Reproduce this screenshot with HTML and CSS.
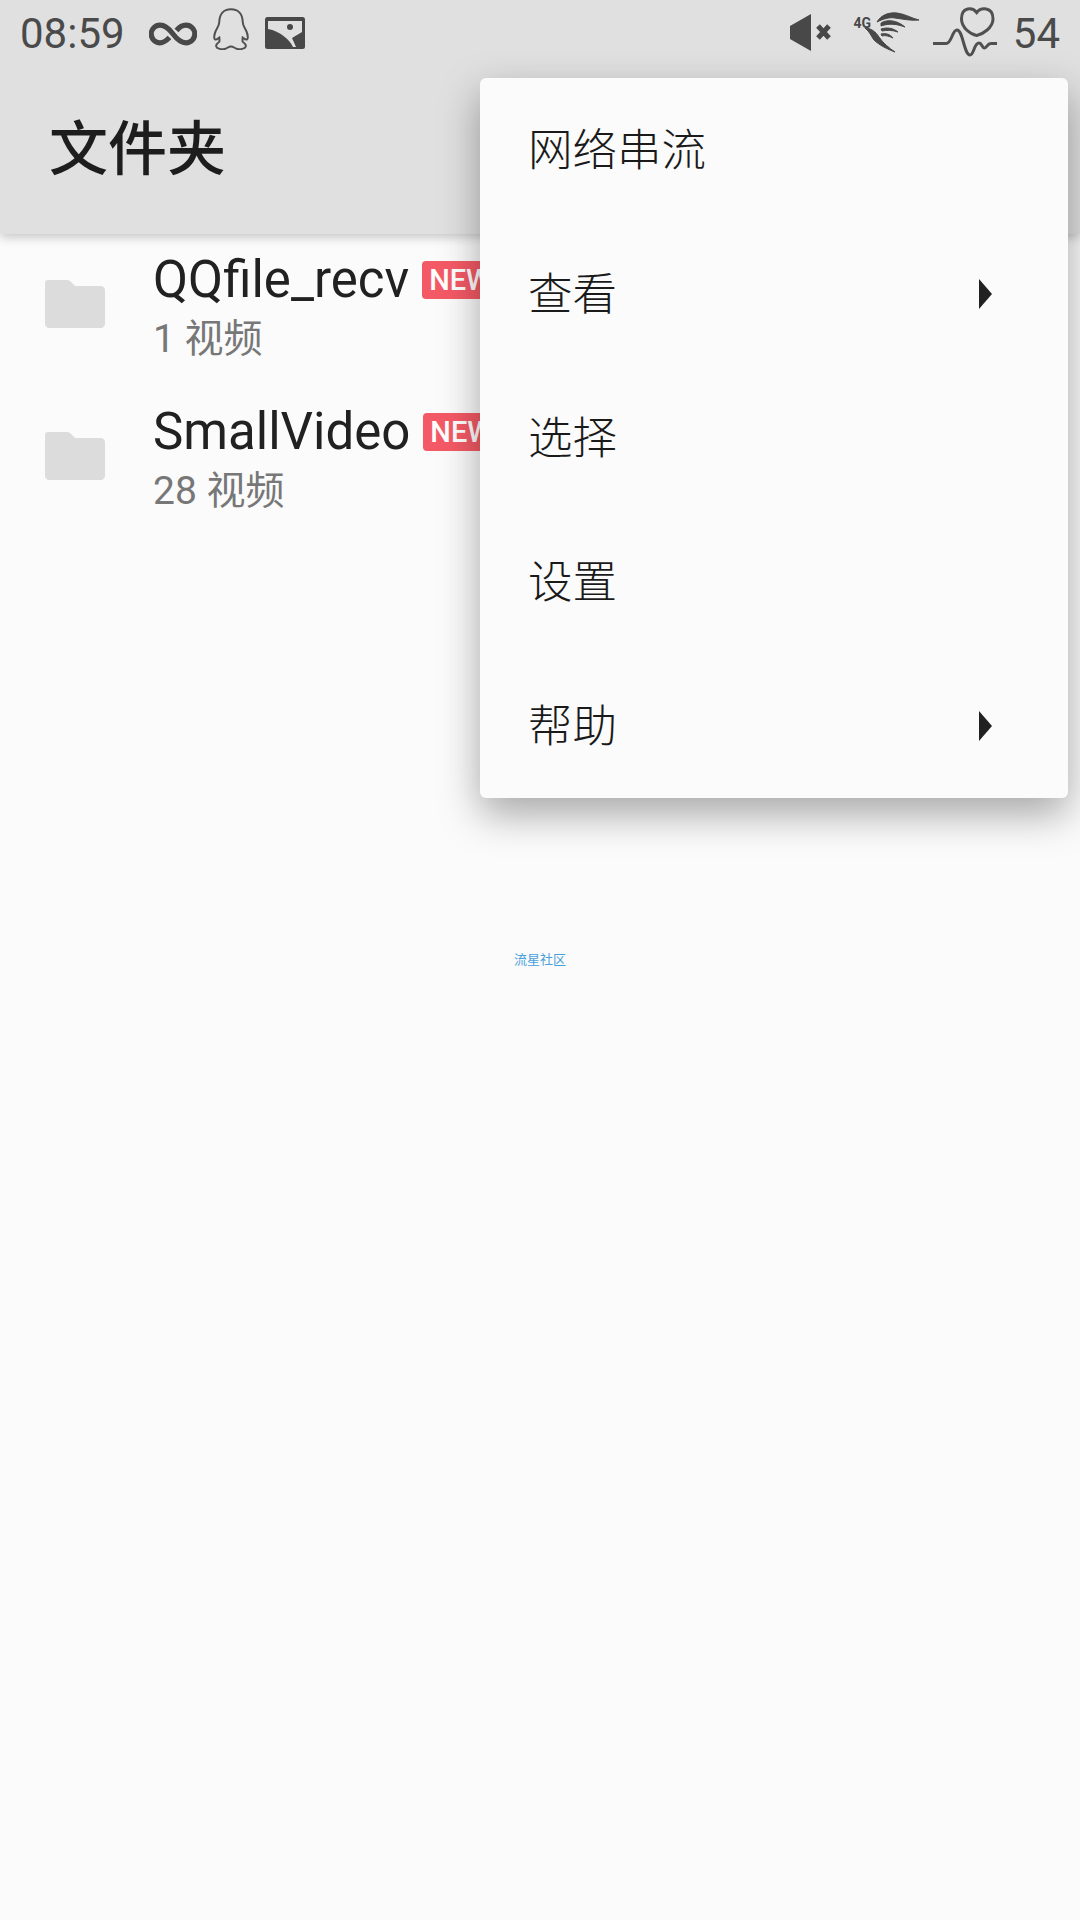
FILE: index.html
```html
<!DOCTYPE html>
<html lang="zh-CN">
<head>
    <meta charset="UTF-8">
    <meta name="viewport" content="width=device-width, initial-scale=1.0">
    <title>文件夹</title>
    <link rel="stylesheet" href="styles.css">
</head>
<body>
    <header class="app-header">
        <div class="status-bar">
            <div class="status-left">
                <span class="clock">08:59</span>
                <svg class="icon-infinity" viewBox="0 0 48 24"><path d="M20.500 15.500C18 18 15 20.800 11 20.800A8.800 8.800 0 0 1 11 3.200C17 3.200 21 8 24 12C27 16 31 20.800 37 20.800A8.800 8.800 0 0 0 37 3.200C33 3.200 30 5.500 27.500 8.500" fill="none" stroke="#484848" stroke-width="5.200"/></svg>
                <svg class="icon-qq" viewBox="0 0 36 42"><path d="M18 1.200C10 1.200 6.500 7 6.300 13.700C6.200 18 4 20 2.500 23.500C1 27 0.800 31 2 31.500C3.500 32 5 30.500 6.300 29.500C6.500 31 6.500 33 6.300 33.700C4.500 35 2.800 36.500 3.200 38.500C4 41 9 41.500 11.500 41C14 40.500 15.500 38.500 18 38.500C20.500 38.500 22 40.500 24.500 41C27 41.500 32 41 32.800 38.500C33.200 36.500 31.500 35 29.700 33.700C29.500 33 29.500 31 29.700 29.500C31 30.500 32.500 32 34 31.500C35.200 31 35 27 33.500 23.500C32 20 29.800 18 29.700 13.700C29.500 7 26 1.200 18 1.200Z" fill="none" stroke="#505050" stroke-width="2"/></svg>
                <svg class="icon-picture" viewBox="0 0 40 32"><rect width="40" height="32" rx="2.500" fill="#484848"/><path d="M3 4H37V15L27 21L31 30H28C25 23 15 14 3 12Z" fill="#e0e0e0"/><circle cx="25" cy="10" r="3" fill="#484848"/></svg>
            </div>
            <div class="status-right">
                <svg class="icon-mute" viewBox="0 0 42 38"><path d="M0 12L21 0V37L0 25Z" fill="#484848"/><path d="M28 12L39 24M39 12L28 24" stroke="#484848" stroke-width="5"/></svg>
                <svg class="icon-signal" viewBox="0 3 80 60">
                    <text class="signal-label" x="8.500" y="27.500">4G</text>
                    <g class="wing">
                        <path d="M32 22C36 15 44 12 52 13C60 14 66 18 74 20C66 21 58 19 50 18C44 17 38 19 32 22Z"/>
                        <path d="M36 23C42 19 52 20 60 27C52 24 44 23 36 26Z"/>
                        <path d="M36 29C42 27 48 28 53 32C47 30 42 30 37 31Z"/>
                        <path d="M36 34C41 33 45 34 48 38C44 36 40 35 37 36Z"/>
                        <path d="M20 28C26 28 31 32 34 37C38 43 44 48 50 52C42 49 34 45 29 40C26 36 25 32 20 28Z"/>
                    </g>
                </svg>
                <svg class="icon-health" viewBox="0 3 80 60"><path d="M51.700 12.500C48 7.500 36.500 6 36.500 19C36.500 28 46 34.500 51.700 35.500C57 34.500 68 28 68 19C68 6 55.500 7.500 51.700 12.500Z" fill="none" stroke="#505050" stroke-width="3"/><path d="M8 43.500H21C27 43.500 27 30 32 30C38 30 39 55 45 55C49 55 49 43 54 43C57 43 57 48 59.500 48C62 48 62 43.500 66 43.500H72" fill="none" stroke="#505050" stroke-width="3"/></svg>
                <span class="battery">54</span>
            </div>
        </div>
        <h1 class="app-title">文件夹</h1>
    </header>

    <main class="folder-list">
        <div class="folder-row">
            <svg class="folder-icon" viewBox="0 0 60 48"><path d="M3 0H22C24 0 25 1 26 2L30 6H56C58 6 60 8 60 10V44C60 46 58 48 56 48H4C2 48 0 46 0 44V3C0 1 1 0 3 0Z"/></svg>
            <div class="folder-text">
                <div class="folder-name">QQfile_recv<span class="new-badge">NEW</span></div>
                <div class="folder-count">1 视频</div>
            </div>
        </div>
        <div class="folder-row">
            <svg class="folder-icon" viewBox="0 0 60 48"><path d="M3 0H22C24 0 25 1 26 2L30 6H56C58 6 60 8 60 10V44C60 46 58 48 56 48H4C2 48 0 46 0 44V3C0 1 1 0 3 0Z"/></svg>
            <div class="folder-text">
                <div class="folder-name">SmallVideo<span class="new-badge">NEW</span></div>
                <div class="folder-count">28 视频</div>
            </div>
        </div>
    </main>

    <p class="watermark">流星社区</p>

    <ul class="popup-menu">
        <li class="menu-item">网络串流</li>
        <li class="menu-item">查看<span class="menu-arrow"></span></li>
        <li class="menu-item">选择</li>
        <li class="menu-item">设置</li>
        <li class="menu-item">帮助<span class="menu-arrow"></span></li>
    </ul>
</body>
</html>
```

FILE: styles.css
```css
* {
    box-sizing: border-box;
}

html, body {
    margin: 0;
    padding: 0;
}

body {
    position: relative;
    width: 1080px;
    height: 1920px;
    overflow: hidden;
    background: #fbfbfb;
    font-family: Roboto, "Noto Sans CJK SC", sans-serif;
    color: #212121;
}

.app-header {
    height: 234px;
    background: #e0e0e0;
    box-shadow: 0 3px 10px rgba(0, 0, 0, 0.22);
    position: relative;
}

.status-bar {
    height: 66px;
    display: flex;
    justify-content: space-between;
    align-items: center;
    padding: 0 20px;
    color: #4a4a4a;
}

.status-left,
.status-right {
    display: flex;
    align-items: center;
}

.clock {
    font-size: 42px;
    margin-right: 24px;
}

.icon-infinity {
    width: 48px;
    height: 24px;
    margin: 2px 16px 0 0;
}

.icon-qq {
    width: 36px;
    height: 42px;
    margin: -8px 16px 0 0;
}

.icon-picture {
    width: 40px;
    height: 32px;
}

.icon-mute {
    width: 42px;
    height: 38px;
    margin-right: 13px;
}

.icon-signal,
.icon-health {
    width: 80px;
    height: 60px;
}

.signal-label {
    font-size: 14px;
    font-weight: 700;
    fill: #484848;
}

.wing path {
    fill: #484848;
    stroke: #484848;
    stroke-width: 1;
}

.icon-health {
    margin-right: 8px;
}

.battery {
    font-size: 42px;
}

.app-title {
    margin: 42px 0 0;
    padding: 0 0 0 49px;
    font-size: 59px;
    font-weight: 500;
    line-height: 84px;
    color: #1d1d1d;
}

.folder-list {
    margin-top: -6px;
}

.folder-row {
    height: 152px;
    display: flex;
    align-items: center;
}

.folder-icon {
    width: 60px;
    height: 48px;
    margin: 0 0 0 45px;
    fill: #dcdcdc;
    flex-shrink: 0;
}

.folder-text {
    margin-left: 48px;
    padding-top: 6px;
}

.folder-name {
    display: flex;
    align-items: center;
    font-size: 51px;
    line-height: 56px;
    white-space: nowrap;
}

.new-badge {
    margin-left: 13px;
    width: 70px;
    height: 38px;
    padding-left: 7px;
    border-radius: 4px;
    background: #f45a66;
    color: #fff;
    font-size: 29px;
    font-weight: 500;
    line-height: 38px;
}

.folder-count {
    margin-top: 7px;
    font-size: 39px;
    line-height: 48px;
    color: #777;
}

.watermark {
    position: absolute;
    left: 0;
    right: 0;
    top: 951px;
    margin: 0;
    text-align: center;
    font-size: 13px;
    line-height: 18px;
    color: #4a9fdc;
}

.popup-menu {
    position: absolute;
    left: 480px;
    top: 78px;
    width: 588px;
    height: 720px;
    margin: 0;
    padding: 0;
    list-style: none;
    background: #fbfbfb;
    border-radius: 6px;
    box-shadow: 0 16px 40px rgba(0, 0, 0, 0.34);
}

.menu-item {
    height: 144px;
    display: flex;
    justify-content: space-between;
    align-items: center;
    padding: 0 76px 8px 48px;
    font-size: 44.5px;
    font-weight: 300;
    color: #1a1a1a;
}

.menu-arrow {
    width: 0;
    height: 0;
    margin-top: 8px;
    border-top: 15px solid transparent;
    border-bottom: 15px solid transparent;
    border-left: 13px solid #212121;
}
```
